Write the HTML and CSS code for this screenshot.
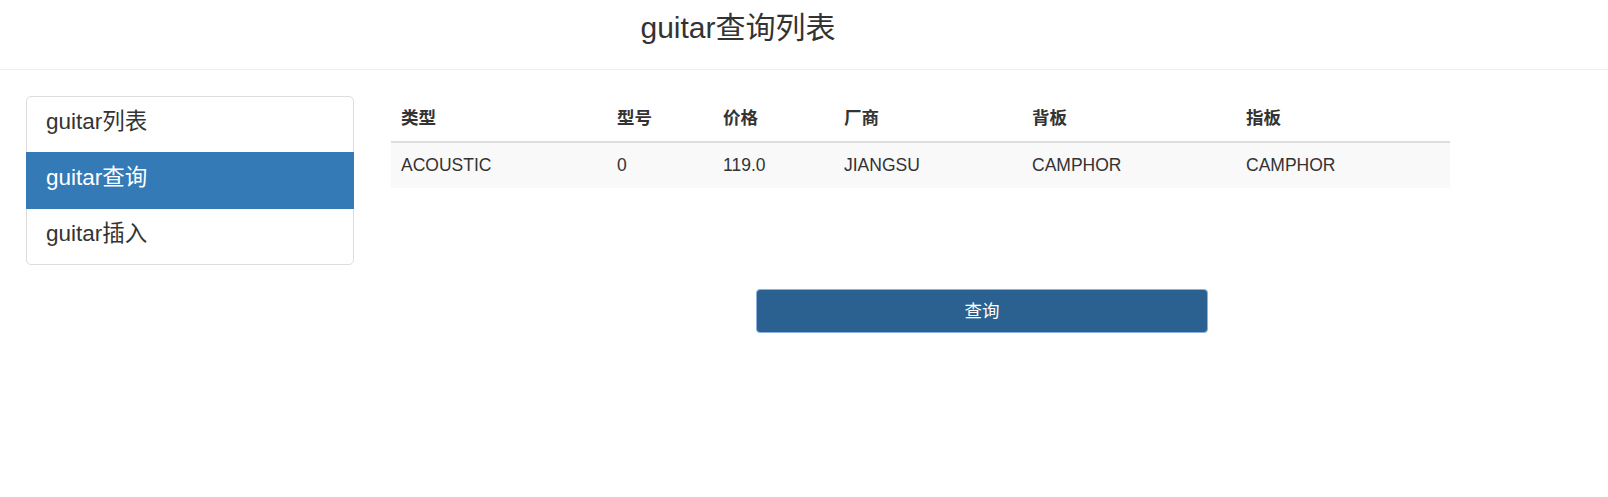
FILE: index.html
```html
<!DOCTYPE html>
<html lang="zh-CN">
<head>
<meta charset="utf-8">
<title>guitar查询列表</title>
<link rel="stylesheet" href="styles.css">
</head>
<body>
<header class="site-header">
  <div class="header-inner">
    <h1 class="page-title">guitar查询列表</h1>
  </div>
</header>
<div class="layout">
  <nav class="side-nav">
    <a class="nav-item" href="#">guitar列表</a>
    <a class="nav-item active" href="#">guitar查询</a>
    <a class="nav-item" href="#">guitar插入</a>
  </nav>
  <main class="content">
    <table class="data-table">
      <colgroup>
        <col class="c1"><col class="c2"><col class="c3"><col class="c4"><col class="c5"><col class="c6">
      </colgroup>
      <thead>
        <tr><th>类型</th><th>型号</th><th>价格</th><th>厂商</th><th>背板</th><th>指板</th></tr>
      </thead>
      <tbody>
        <tr><td>ACOUSTIC</td><td>0</td><td>119.0</td><td>JIANGSU</td><td>CAMPHOR</td><td>CAMPHOR</td></tr>
      </tbody>
    </table>
    <div class="actions">
      <button class="btn-query" type="button">查询</button>
    </div>
  </main>
</div>
</body>
</html>
```
FILE: styles.css
```css
* { box-sizing: border-box; }
html, body { margin: 0; padding: 0; background: #fff; }
body {
  font-family: "Liberation Sans", Arial, "Noto Sans CJK SC", sans-serif;
  color: #333;
  font-size: 17.5px;
  line-height: 25px;
}
.site-header {
  height: 70px;
  border-bottom: 1px solid #eee;
}
.header-inner {
  margin-left: 26px;
  width: 1424px;
  text-align: center;
}
.page-title {
  margin: 0;
  padding-top: 10px;
  font-size: 30px;
  line-height: 36px;
  font-weight: normal;
  color: #333;
}
.layout {
  display: flex;
  align-items: flex-start;
  padding: 26px 0 0 26px;
  gap: 37px;
}
.side-nav {
  width: 328px;
  display: flex;
  flex-direction: column;
}
.nav-item {
  position: relative;
  display: flex;
  align-items: center;
  height: 57px;
  margin-bottom: -1px;
  padding: 0 19px 6px;
  border: 1px solid #ddd;
  background: #fff;
  color: #333;
  text-decoration: none;
  font-size: 22.5px;
  line-height: 32px;
}
.nav-item:first-child { border-radius: 5px 5px 0 0; }
.nav-item:last-child { border-radius: 0 0 5px 5px; margin-bottom: 0; }
.nav-item.active {
  z-index: 2;
  background: #337ab7;
  border-color: #337ab7;
  color: #fff;
}
.content {
  width: 1059px;
}
.data-table {
  width: 1059px;
  border-collapse: collapse;
  border-spacing: 0;
  table-layout: fixed;
}
.c1 { width: 216px; }
.c2 { width: 106px; }
.c3 { width: 121px; }
.c4 { width: 188px; }
.c5 { width: 214px; }
.c6 { width: 214px; }
.data-table th,
.data-table td {
  padding: 10px;
  text-align: left;
  line-height: 25px;
  white-space: nowrap;
}
.data-table th {
  font-weight: bold;
  vertical-align: bottom;
  border-bottom: 2px solid #ddd;
}
.data-table tbody tr {
  background: #f9f9f9;
}
.actions {
  padding: 101px 0 0 365px;
}
.btn-query {
  display: block;
  width: 452px;
  height: 44px;
  padding: 0;
  border: 1px solid #8ab0e4;
  border-radius: 4px;
  background: #2a6190;
  color: #fff;
  font-family: "Liberation Sans", Arial, "Noto Sans CJK SC", sans-serif;
  font-size: 17.5px;
  line-height: 25px;
  cursor: pointer;
}
```
